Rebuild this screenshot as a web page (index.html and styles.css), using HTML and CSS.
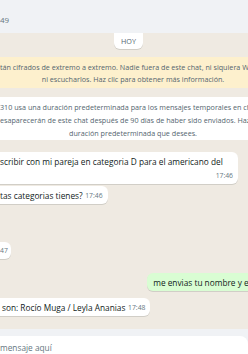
FILE: index.html
```html
<!DOCTYPE html>
<html lang="es">
<head>
    <meta charset="UTF-8">
    <meta name="viewport" content="width=device-width, initial-scale=1.0">
    <title>Chat</title>
    <link rel="stylesheet" href="styles.css">
</head>
<body>
    <div class="app">
        <header class="chat-header">
            <span class="contact-sub">49</span>
        </header>

        <main class="chat">
            <div class="chat-inner">
                <div class="day-pill">HOY</div>

                <div class="notice notice-crypto">
                    <span class="notice-clip">tán cifrados de extremo a extremo. Nadie fuera de este chat, ni siquiera WhatsApp, puede leerlos</span>
                    <span>ni escucharlos. Haz clic para obtener más información.</span>
                </div>

                <div class="notice notice-timer">
                    <span class="notice-clip">310 usa una duración predeterminada para los mensajes temporales en chats nuevos. Los mensajes nuevos</span>
                    <span class="notice-clip">esaparecerán de este chat después de 90 días de haber sido enviados. Haz clic para cambiar a la</span>
                    <span>duración predeterminada que desees.</span>
                </div>

                <div class="msg msg-in msg-first">
                    <span class="msg-text">scribir con mi pareja en categoria D para el americano del</span>
                    <span class="msg-time">17:46</span>
                </div>
                <div class="msg msg-in msg-next">
                    <span class="msg-text">tas categorias tienes?</span>
                    <span class="msg-time">17:46</span>
                </div>

                <div class="msg msg-in msg-stamp">
                    <span class="msg-time-only">47</span>
                </div>

                <div class="msg msg-out">
                    <span class="msg-text">me envias tu nombre y el de tu pareja?</span>
                    <span class="msg-time">17:47</span>
                </div>

                <div class="msg msg-in msg-last">
                    <span class="msg-text">son: Rocío Muga / Leyla Ananias</span>
                    <span class="msg-time">17:48</span>
                </div>
            </div>
        </main>

        <footer class="composer">
            <div class="composer-input">mensaje aquí</div>
        </footer>
    </div>
</body>
</html>
```

FILE: styles.css
```css
* {
    margin: 0;
    padding: 0;
    box-sizing: border-box;
}
body {
    font-family: "Segoe UI", "Open Sans", sans-serif;
    width: 248px;
    height: 354px;
    overflow: hidden;
    color: #111b21;
}
.app {
    display: flex;
    flex-direction: column;
    height: 354px;
}
.chat-header {
    height: 33px;
    flex-shrink: 0;
    background-color: #f0f2f5;
    padding-top: 14px;
}
.contact-sub {
    display: block;
    font-size: 8px;
    line-height: 12px;
    color: #667781;
}
.chat {
    flex: 1;
    overflow: hidden;
    background-color: #efeae2;
}
/* the panel is wider than the window, we only see its middle */
.chat-inner {
    display: flex;
    flex-direction: column;
    margin: 0 -28px 0 -10px;
}
.day-pill {
    align-self: center;
    margin: -6px 9px 0 0;
    padding: 9px 7px 3px;
    background-color: #fff;
    border-radius: 6px;
    font-size: 7.2px;
    line-height: 10px;
    color: #54656f;
    box-shadow: 0 1px 0.5px rgba(11, 20, 26, 0.13);
}
.notice {
    display: flex;
    flex-direction: column;
    font-size: 7.2px;
    color: #54656f;
    text-align: center;
}
.notice-crypto {
    margin-top: 8px;
    padding: 4px 0 3px;
    line-height: 12px;
    background-color: #fdf0cd;
}
.notice-timer {
    margin-top: 9px;
    height: 43px;
    padding-top: 4px;
    line-height: 13px;
    background-color: #fff;
}
.notice-clip {
    text-align: left;
    white-space: nowrap;
    padding-left: 10px;
}
.msg {
    position: relative;
    max-width: 248px;
    padding: 3px 5px 2px 10px;
    font-size: 8.3px;
    line-height: 13px;
    border-radius: 6px;
    box-shadow: 0 1px 0.5px rgba(11, 20, 26, 0.13);
}
.msg-in {
    align-self: flex-start;
    background-color: #fff;
}
.msg-out {
    align-self: flex-end;
    margin-right: -52px;
    padding-left: 6px;
    background-color: #d9fdd3;
}
.msg-text::after {
    content: "";
    display: inline-block;
    width: 20px;
}
.msg-time {
    position: absolute;
    right: 5px;
    bottom: 3px;
    font-size: 6.8px;
    line-height: 10px;
    color: #667781;
}
.msg-time-only {
    display: block;
    font-size: 6.8px;
    line-height: 12px;
    color: #667781;
}
.msg-first {
    margin-top: 12px;
    padding-bottom: 3px;
}
.msg-next {
    margin-top: 2px;
}
.msg-stamp {
    margin-top: 38px;
    padding: 3px 3px 2px 10px;
}
.msg-out {
    margin-top: 14px;
}
.msg-last {
    margin-top: 7px;
    padding-left: 12px;
}
.composer {
    height: 25px;
    flex-shrink: 0;
    padding-top: 7px;
    background-color: #f0f2f5;
}
.composer-input {
    height: 30px;
    margin-left: -10px;
    padding: 7px 0 0 10px;
    background-color: #fff;
    border-radius: 8px;
    font-size: 8.3px;
    line-height: 10px;
    color: #667781;
}
```
